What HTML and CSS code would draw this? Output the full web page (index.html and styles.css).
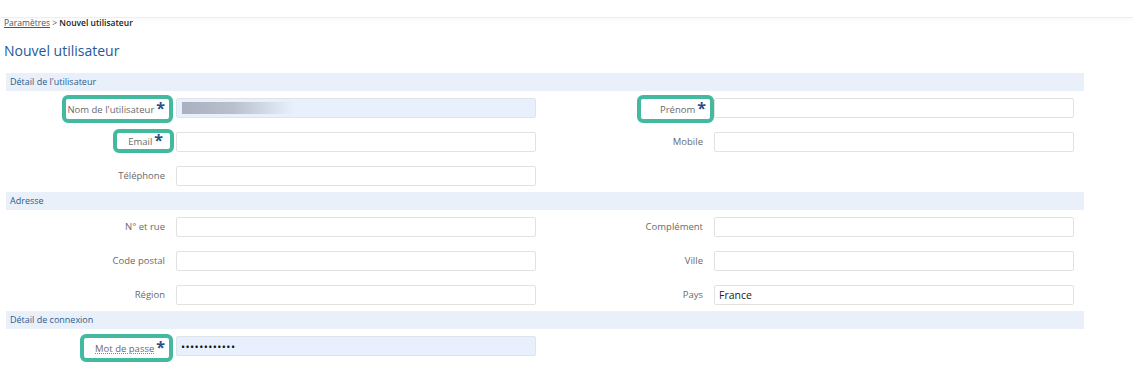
FILE: index.html
```html
<!DOCTYPE html>
<html lang="fr">
<head>
    <meta charset="UTF-8">
    <meta name="viewport" content="width=device-width, initial-scale=1.0">
    <title>Nouvel utilisateur</title>
    <link rel="stylesheet" href="styles.css">
</head>
<body>
    <div class="topbar"></div>

    <div class="page">
        <div class="crumbs"><a href="#">Paramètres</a> &gt; <b>Nouvel utilisateur</b></div>
        <h1>Nouvel utilisateur</h1>

        <form class="userForm">
            <div class="panel">
                <h2>Détail de l'utilisateur</h2>
                <div class="rows">
                    <div class="row">
                        <div class="field">
                            <label><span class="mark mark-nom">Nom de l'utilisateur<i>*</i></span></label>
                            <input type="text" name="username" class="filled blurred">
                        </div>
                        <div class="field">
                            <label><span class="mark mark-prenom">Prénom<i>*</i></span></label>
                            <input type="text" name="firstname">
                        </div>
                    </div>
                    <div class="row">
                        <div class="field">
                            <label><span class="mark mark-email">Email<i>*</i></span></label>
                            <input type="text" name="email">
                        </div>
                        <div class="field">
                            <label>Mobile</label>
                            <input type="text" name="mobile">
                        </div>
                    </div>
                    <div class="row">
                        <div class="field">
                            <label>Téléphone</label>
                            <input type="text" name="phone">
                        </div>
                    </div>
                </div>
            </div>

            <div class="panel">
                <h2>Adresse</h2>
                <div class="rows">
                    <div class="row">
                        <div class="field">
                            <label>N° et rue</label>
                            <input type="text" name="street">
                        </div>
                        <div class="field">
                            <label>Complément</label>
                            <input type="text" name="street2">
                        </div>
                    </div>
                    <div class="row">
                        <div class="field">
                            <label>Code postal</label>
                            <input type="text" name="zip">
                        </div>
                        <div class="field">
                            <label>Ville</label>
                            <input type="text" name="city">
                        </div>
                    </div>
                    <div class="row">
                        <div class="field">
                            <label>Région</label>
                            <input type="text" name="region">
                        </div>
                        <div class="field">
                            <label>Pays</label>
                            <input type="text" name="country" value="France">
                        </div>
                    </div>
                </div>
            </div>

            <div class="panel">
                <h2>Détail de connexion</h2>
                <div class="rows">
                    <div class="row">
                        <div class="field">
                            <label><span class="mark mark-pass"><abbr title="Mot de passe">Mot de passe</abbr><i>*</i></span></label>
                            <input type="password" name="password" class="filled" value="azertyuiop12">
                        </div>
                    </div>
                </div>
            </div>
        </form>
    </div>
</body>
</html>
```

FILE: styles.css
```css
body {
    margin: 0;
    font-family: "Open Sans", "Liberation Sans", sans-serif;
    color: #333;
    background: #fff;
}

.topbar {
    height: 17px;
    border-bottom: 1px solid #eeeeee;
    box-shadow: 0 2px 6px rgba(0, 0, 0, 0.03);
}

.page {
    padding: 0 4px;
}

.crumbs {
    font-size: 8.5px;
    line-height: 10px;
    color: #555;
}

.crumbs a {
    color: #555;
}

.crumbs b {
    color: #222;
    font-weight: 600;
}

h1 {
    margin: 13px 0 0;
    font-size: 14px;
    line-height: 20px;
    font-weight: 400;
    color: #23599a;
}

.userForm {
    width: 1078px;
    margin: 12px 0 0 2px;
}

.panel h2 {
    margin: 0;
    height: 18px;
    line-height: 18px;
    padding-left: 4px;
    font-size: 9px;
    font-weight: 400;
    color: #2d5b8e;
    background-color: #e9f0f9;
}

.rows {
    display: flex;
    flex-direction: column;
    gap: 14px;
    padding: 7px 0 6px;
}

.row {
    display: flex;
}

.field {
    display: flex;
    align-items: center;
    width: 538px;
}

.field label {
    box-sizing: border-box;
    width: 170px;
    height: 20px;
    padding-right: 11px;
    display: flex;
    justify-content: flex-end;
    align-items: center;
    font-size: 9.5px;
    line-height: 14px;
    color: #6a6a6a;
}

.field input {
    box-sizing: border-box;
    width: 360px;
    height: 20px;
    margin: 0;
    padding: 0 4px;
    border: 1px solid #e2e2e2;
    border-radius: 2px;
    font-family: "Open Sans", "Liberation Sans", sans-serif;
    font-size: 10.5px;
    color: #222;
    background: #fff;
}

.field input[type="password"] {
    font-size: 11px;
    letter-spacing: 0.4px;
    color: #111;
}

.field input.filled {
    background-color: #e8f0fe;
    border-color: #dfe3ea;
}

.field input.blurred {
    background: linear-gradient(90deg, #aab0bf 0%, #b9bfcc 45%, rgba(232, 240, 254, 0) 100%) no-repeat 5px 3px / 112px 12px, #e8f0fe;
}

.mark {
    flex-shrink: 0;
    display: inline-flex;
    align-items: center;
    box-sizing: border-box;
    height: 28px;
    padding: 2px 4px 0 1px;
    margin: -3px -8px -5px 0;
    border: 4px solid #43b9a0;
    border-radius: 6px;
    background: #fff;
}

.mark i {
    font-style: normal;
    font-weight: 700;
    font-size: 16px;
    line-height: 14px;
    color: #2b4f85;
    margin-left: 2px;
    position: relative;
    top: -2px;
}

.mark abbr {
    text-decoration: underline dotted #888;
}

.mark-email {
    height: 24px;
    padding: 2px 7px 0 11px;
    margin: -3px -9px -1px 0;
}

.mark-prenom {
    padding-left: 19px;
    margin-right: -11px;
}

.mark-pass {
    padding-left: 11px;
    margin: -2px -8px -6px 0;
}
```
